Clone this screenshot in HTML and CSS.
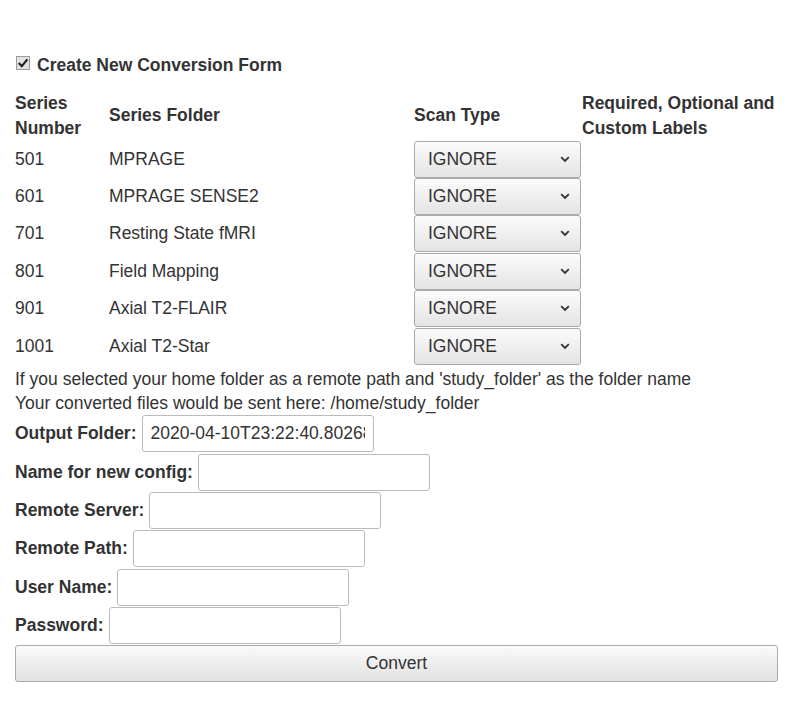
FILE: index.html
```html
<!DOCTYPE html>
<html>
<head>
<meta charset="utf-8">
<link rel="stylesheet" href="styles.css">
</head>
<body>
<div class="page">
  <div class="title">
    <span class="check"><svg width="14" height="14" viewBox="0 0 14 14"><rect x="0.5" y="0.5" width="13" height="13" fill="#e2e2e2" stroke="#444" stroke-dasharray="1 1"/><path d="M2.8 7 L5.8 10.2 L11.4 3.4" fill="none" stroke="#1e1e1e" stroke-width="2.2"/></svg></span>
    <span class="title-text">Create New Conversion Form</span>
  </div>
  <table class="series">
    <colgroup>
      <col class="c1"><col class="c2"><col class="c3"><col class="c4">
    </colgroup>
    <thead>
      <tr>
        <th>Series Number</th>
        <th>Series Folder</th>
        <th>Scan Type</th>
        <th>Required, Optional and Custom Labels</th>
      </tr>
    </thead>
    <tbody>
      <tr><td>501</td><td>MPRAGE</td><td><div class="sel">IGNORE<svg class="chev" width="10" height="7" viewBox="0 0 10 7"><path d="M1.2 1.2 L5 5 L8.8 1.2" fill="none" stroke="#333" stroke-width="1.8"/></svg></div></td><td></td></tr>
      <tr><td>601</td><td>MPRAGE SENSE2</td><td><div class="sel">IGNORE<svg class="chev" width="10" height="7" viewBox="0 0 10 7"><path d="M1.2 1.2 L5 5 L8.8 1.2" fill="none" stroke="#333" stroke-width="1.8"/></svg></div></td><td></td></tr>
      <tr><td>701</td><td>Resting State fMRI</td><td><div class="sel">IGNORE<svg class="chev" width="10" height="7" viewBox="0 0 10 7"><path d="M1.2 1.2 L5 5 L8.8 1.2" fill="none" stroke="#333" stroke-width="1.8"/></svg></div></td><td></td></tr>
      <tr><td>801</td><td>Field Mapping</td><td><div class="sel">IGNORE<svg class="chev" width="10" height="7" viewBox="0 0 10 7"><path d="M1.2 1.2 L5 5 L8.8 1.2" fill="none" stroke="#333" stroke-width="1.8"/></svg></div></td><td></td></tr>
      <tr><td>901</td><td>Axial T2-FLAIR</td><td><div class="sel">IGNORE<svg class="chev" width="10" height="7" viewBox="0 0 10 7"><path d="M1.2 1.2 L5 5 L8.8 1.2" fill="none" stroke="#333" stroke-width="1.8"/></svg></div></td><td></td></tr>
      <tr><td>1001</td><td>Axial T2-Star</td><td><div class="sel">IGNORE<svg class="chev" width="10" height="7" viewBox="0 0 10 7"><path d="M1.2 1.2 L5 5 L8.8 1.2" fill="none" stroke="#333" stroke-width="1.8"/></svg></div></td><td></td></tr>
    </tbody>
  </table>
  <p class="note">If you selected your home folder as a remote path and 'study_folder' as the folder name<br>Your converted files would be sent here: /home/study_folder</p>
  <div class="frow"><label>Output Folder:</label><input class="inp" type="text" value="2020-04-10T23:22:40.802689"></div>
  <div class="frow"><label>Name for new config:</label><input class="inp" type="text"></div>
  <div class="frow"><label>Remote Server:</label><input class="inp" type="text"></div>
  <div class="frow"><label>Remote Path:</label><input class="inp" type="text"></div>
  <div class="frow"><label>User Name:</label><input class="inp" type="text"></div>
  <div class="frow"><label>Password:</label><input class="inp" type="password"></div>
  <button class="convert" type="button">Convert</button>
</div>
</body>
</html>
```

FILE: styles.css
```css
html, body {
  margin: 0;
  padding: 0;
  background: #fff;
}
body {
  font-family: "Liberation Sans", Arial, sans-serif;
  font-size: 17.5px;
  line-height: 25px;
  color: #333;
}
.page {
  width: 763px;
  padding: 53px 0 0 15px;
}
.title {
  display: flex;
  align-items: center;
  height: 25px;
  font-weight: bold;
}
.check {
  display: inline-flex;
  width: 14px;
  height: 14px;
  margin: -5px 7px 0 1px;
}
.series {
  border-collapse: collapse;
  margin-top: 12.5px;
  width: 763px;
  table-layout: fixed;
}
.c1 { width: 94px; }
.c2 { width: 305px; }
.c3 { width: 168px; }
.c4 { width: 196px; }
.series th {
  text-align: left;
  padding: 0;
  font-weight: bold;
  vertical-align: middle;
  height: 49px;
  line-height: 25px;
}
.series td {
  padding: 0;
  height: 37.4px;
  vertical-align: middle;
}
.sel {
  position: relative;
  box-sizing: border-box;
  width: 167px;
  height: 37px;
  border: 1px solid #aaa;
  border-radius: 3px;
  background: linear-gradient(#fbfbfb, #e4e4e4);
  padding-left: 13px;
  line-height: 35px;
  color: #333;
}
.chev {
  position: absolute;
  right: 10px;
  top: 14px;
}
.note {
  margin: 2px 0 0;
  line-height: 24px;
}
.frow {
  display: flex;
  align-items: center;
  gap: 5px;
  height: 38.3px;
}
.frow label {
  font-weight: bold;
}
.inp {
  box-sizing: border-box;
  width: 232px;
  height: 37px;
  border: 1px solid #bbb;
  border-radius: 3px;
  background: #fff;
  padding: 0 8px;
  font-family: "Liberation Sans", Arial, sans-serif;
  font-size: 17.5px;
  color: #333;
  outline: none;
}
.convert {
  display: block;
  box-sizing: border-box;
  width: 763px;
  height: 37px;
  margin-top: 0;
  border: 1px solid #aaa;
  border-radius: 3px;
  background: linear-gradient(#fafafa, #e2e2e2);
  font-family: "Liberation Sans", Arial, sans-serif;
  font-size: 17.5px;
  color: #333;
}
```
